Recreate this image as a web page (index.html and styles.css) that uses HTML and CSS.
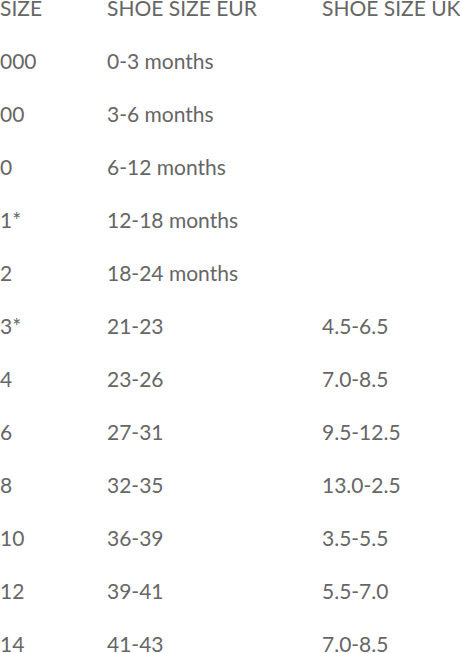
FILE: index.html
```html
<!DOCTYPE html>
<html>
<head>
<meta charset="utf-8">
<link rel="stylesheet" href="styles.css">
</head>
<body>
<div class="size-table">
  <div class="cell head">SIZE</div><div class="cell head">SHOE SIZE EUR</div><div class="cell head">SHOE SIZE UK</div>
  <div class="cell">000</div><div class="cell">0-3 months</div><div class="cell"></div>
  <div class="cell">00</div><div class="cell">3-6 months</div><div class="cell"></div>
  <div class="cell">0</div><div class="cell">6-12 months</div><div class="cell"></div>
  <div class="cell">1*</div><div class="cell">12-18 months</div><div class="cell"></div>
  <div class="cell">2</div><div class="cell">18-24 months</div><div class="cell"></div>
  <div class="cell">3*</div><div class="cell">21-23</div><div class="cell">4.5-6.5</div>
  <div class="cell">4</div><div class="cell">23-26</div><div class="cell">7.0-8.5</div>
  <div class="cell">6</div><div class="cell">27-31</div><div class="cell">9.5-12.5</div>
  <div class="cell">8</div><div class="cell">32-35</div><div class="cell">13.0-2.5</div>
  <div class="cell">10</div><div class="cell">36-39</div><div class="cell">3.5-5.5</div>
  <div class="cell">12</div><div class="cell">39-41</div><div class="cell">5.5-7.0</div>
  <div class="cell">14</div><div class="cell">41-43</div><div class="cell">7.0-8.5</div>
</div>
</body>
</html>
```
FILE: styles.css
```css
html, body {
  margin: 0;
  padding: 0;
  background: #fff;
  overflow: hidden;
}
.size-table {
  display: grid;
  grid-template-columns: 107px 215px 1fr;
  grid-auto-rows: 53px;
  margin-top: -19px;
  font-family: Lato, "Liberation Sans", sans-serif;
  font-size: 21px;
  color: #666;
}
.cell {
  line-height: 53px;
  white-space: nowrap;
}
```
